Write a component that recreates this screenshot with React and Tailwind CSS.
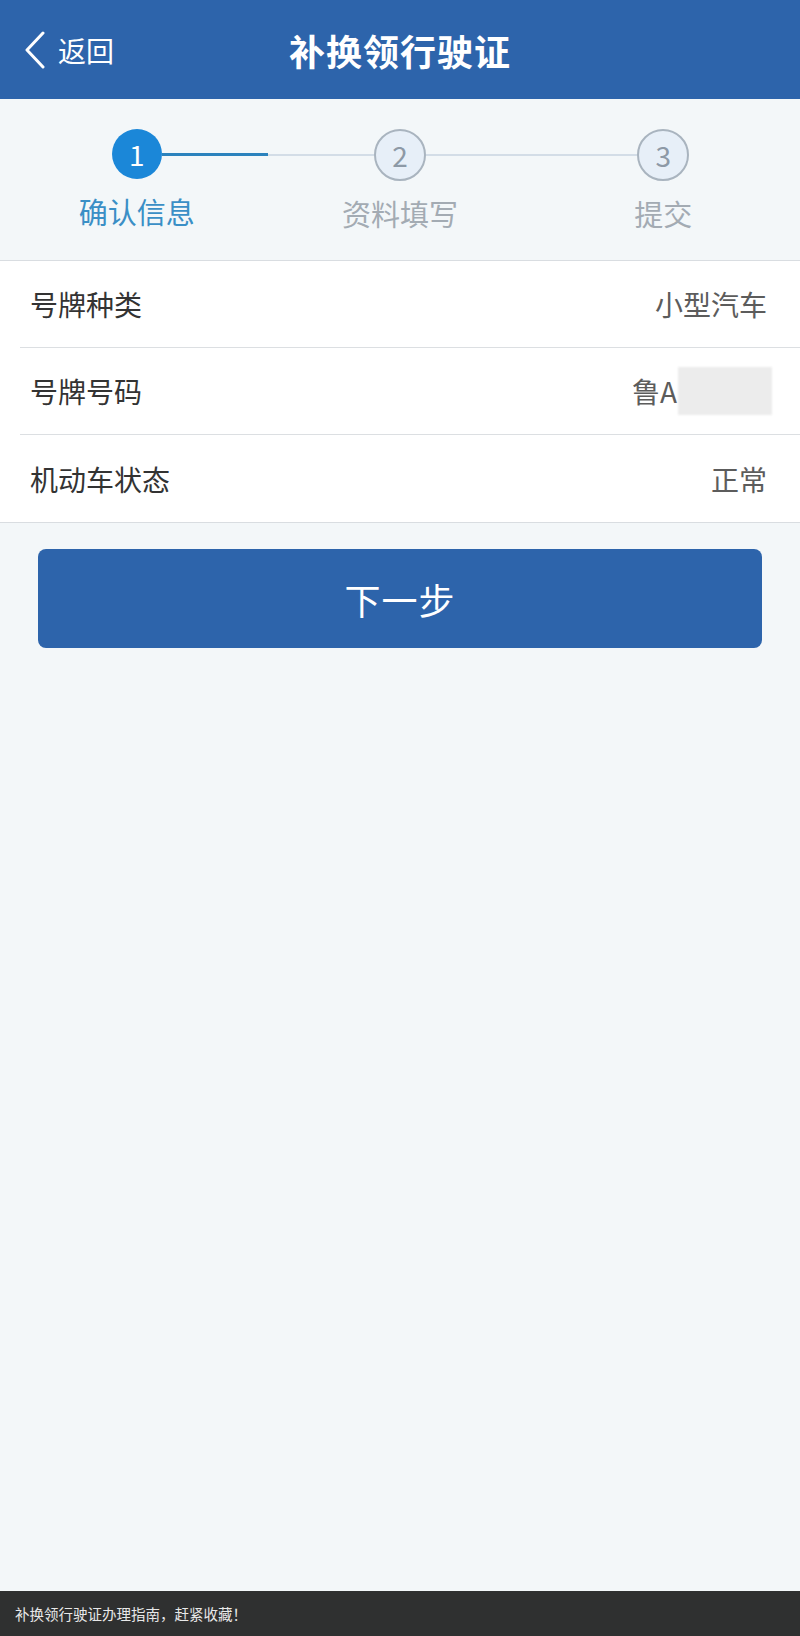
import React from 'react';

const font = { fontFamily: '"Noto Sans CJK SC", "Noto Sans", sans-serif' };

const steps = [
    { num: 1, label: '确认信息', active: true },
    { num: 2, label: '资料填写', active: false },
    { num: 3, label: '提交', active: false },
];

const rows = [
    { label: '号牌种类', value: '小型汽车' },
    { label: '号牌号码', value: '鲁A', masked: true },
    { label: '机动车状态', value: '正常' },
];

function Step({ step, index }) {
    const leftLine = index === 0 ? 'bg-transparent' : 'bg-[#d3dde7]';
    const rightLine =
        index === steps.length - 1 ? 'bg-transparent' : step.active ? 'bg-[#2b82bd] h-[3px]' : 'bg-[#d3dde7]';

    return (
        <div className="flex flex-col items-center">
            <div className="flex items-center w-full">
                <div className={`flex-1 h-[2px] ${leftLine}`}></div>
                {step.active ? (
                    <div className="w-[50px] h-[50px] rounded-full bg-[#1b87d8] text-white flex items-center justify-center text-[28px] leading-none">
                        {step.num}
                    </div>
                ) : (
                    <div className="w-[52px] h-[52px] rounded-full bg-[#e7eff8] border-2 border-[#a9b4bf] text-[#8d99a6] flex items-center justify-center text-[28px] leading-none">
                        {step.num}
                    </div>
                )}
                <div className={`flex-1 h-[2px] ${rightLine}`}></div>
            </div>
            <span className={`mt-[18px] text-[29px] leading-none ${step.active ? 'text-[#3a8fc6]' : 'text-[#a3abb3]'}`}>
                {step.label}
            </span>
        </div>
    );
}

function App() {
    return (
        <div className="min-h-[1636px] flex flex-col bg-[#f3f7f9]" style={font}>
            {/* header */}
            <div className="h-[99px] bg-[#2d64ab] grid grid-cols-[1fr_auto_1fr] items-center text-white">
                <button className="flex items-center pl-[24px]">
                    <svg width="22" height="38" viewBox="0 0 22 38" fill="none" stroke="currentColor" strokeWidth="3" strokeLinecap="round" strokeLinejoin="round">
                        <polyline points="19,2 3,19 19,36" />
                    </svg>
                    <span className="text-[28px] ml-[12px]">返回</span>
                </button>
                <h1 className="text-[36px] font-bold tracking-[1px]">补换领行驶证</h1>
                <div></div>
            </div>

            {/* stepper */}
            <div className="grid grid-cols-3 px-[5px] pt-[30px] pb-[32px] border-b border-[#d9dde1]">
                {steps.map((step, i) => (
                    <Step key={step.num} step={step} index={i} />
                ))}
            </div>

            {/* info rows */}
            <div className="bg-white border-b border-[#d9dde1]">
                {rows.map((row, i) => (
                    <div
                        key={row.label}
                        className={`h-[87px] flex items-center justify-between pr-[33px] ${
                            i < rows.length - 1 ? 'ml-[20px] pl-[10px] border-b border-[#dcdfe2]' : 'pl-[30px]'
                        }`}
                    >
                        <span className="text-[28px] text-[#333]">{row.label}</span>
                        <span className="text-[28px] text-[#5c5c5c] flex items-center">
                            {row.value}
                            {row.masked && (
                                <span className="ml-[1px] -mr-[5px] w-[94px] h-[48px] bg-[#ececec] blur-[1px]"></span>
                            )}
                        </span>
                    </div>
                ))}
            </div>

            {/* next button */}
            <button className="mx-[38px] mt-[26px] h-[99px] rounded-[8px] bg-[#2d64ab] text-white text-[36px] tracking-[1px]">
                下一步
            </button>

            {/* footer */}
            <div className="mt-auto h-[45px] bg-[#2f3030] flex items-center px-[15px] text-[14.5px] text-[#e8e8e8]">
                补换领行驶证办理指南，赶紧收藏！
            </div>
        </div>
    );
}

export default App;
